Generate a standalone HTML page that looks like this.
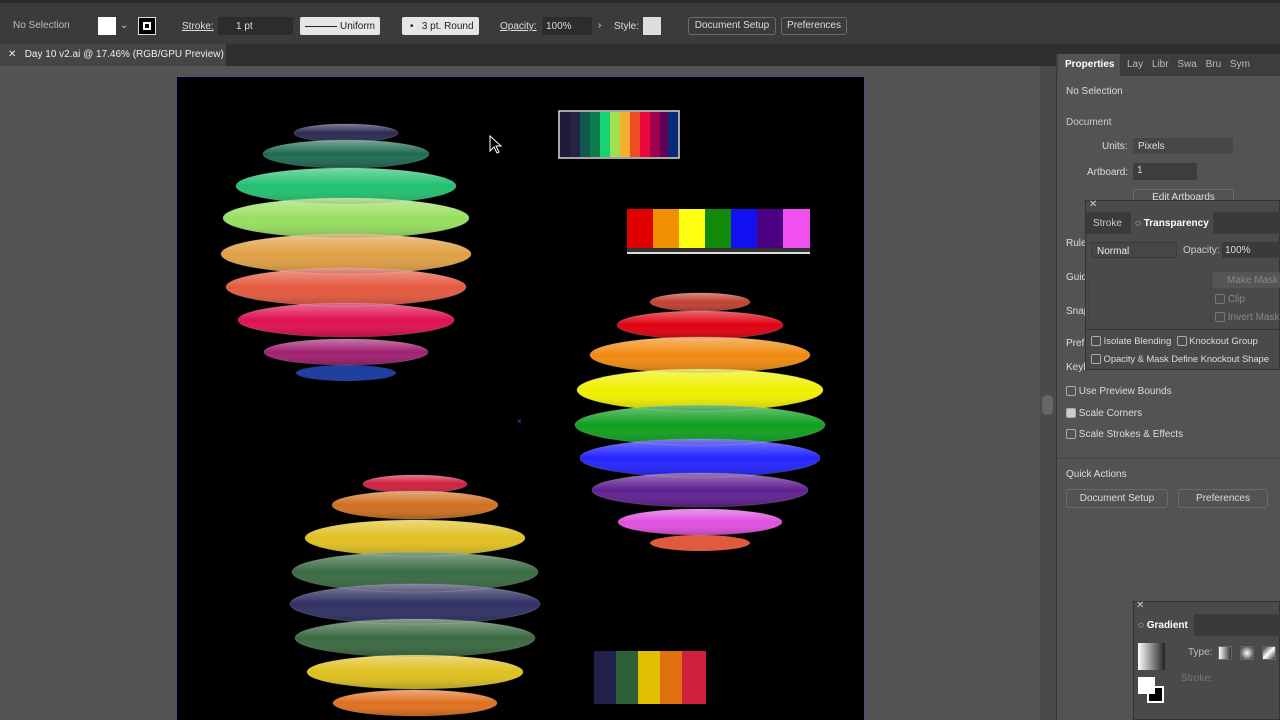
<!DOCTYPE html><html><head><style>
*{margin:0;padding:0;box-sizing:border-box}
body{width:1280px;height:720px;overflow:hidden;background:#535353;font-family:"Liberation Sans",sans-serif;font-size:10px;color:#ddd;position:relative}
.a{position:absolute;white-space:nowrap}
.tb{top:0;left:0;width:1280px;height:44px;background:#3b3b3b}
.tab{top:44px;left:0;width:1280px;height:22px;background:#2f2f2f}
.box{background:#2c2c2c;border-radius:2px}
.lt{background:#e6e6e6;color:#222;border-radius:2px}
.btn{border:1px solid #6b6b6b;border-radius:3px;text-align:center;color:#ddd;line-height:16px;font-size:10px}
.cb{width:10px;height:10px;border:1px solid #aaa;border-radius:2px}
</style></head><body>
<div class="a tb"></div>
<div class="a" style="top:0;left:0;width:1280px;height:3px;background:#2a2a2a"></div>
<div class="a" style="top:20px;left:13px;color:#bbb">No Selection</div>
<div class="a" style="top:17px;left:98px;width:18px;height:18px;background:#fff"></div>
<div class="a" style="top:20px;left:120px;color:#ccc">⌄</div>
<div class="a" style="top:17px;left:138px;width:18px;height:18px;background:#000;border:1px solid #ddd"><div style="margin:4px;width:8px;height:8px;border:2px solid #fff"></div></div>
<div class="a" style="top:21px;left:182px;text-decoration:underline">Stroke:</div>
<div class="a box" style="top:17px;left:218px;width:75px;height:18px;padding:4px 0 0 18px">1 pt</div>
<div class="a lt" style="top:17px;left:300px;width:80px;height:18px;padding:4px 0 0 40px"><span class="a" style="left:5px;top:9px;width:32px;height:1px;background:#222"></span>Uniform</div>
<div class="a lt" style="top:17px;left:402px;width:77px;height:18px;padding:4px 0 0 8px">•&nbsp;&nbsp; 3 pt. Round</div>
<div class="a" style="top:21px;left:500px;text-decoration:underline">Opacity:</div>
<div class="a box" style="top:17px;left:542px;width:50px;height:18px;padding:4px 0 0 4px">100%</div>
<div class="a" style="top:20px;left:598px">›</div>
<div class="a" style="top:21px;left:614px">Style:</div>
<div class="a" style="top:17px;left:643px;width:18px;height:18px;background:#ddd"></div>
<div class="a btn" style="top:17px;left:688px;width:88px;height:18px">Document Setup</div>
<div class="a btn" style="top:17px;left:781px;width:66px;height:18px">Preferences</div>
<div class="a tab"></div>
<div class="a" style="top:44px;left:0;width:226px;height:22px;background:#454545;padding:5px 0 0 8px;color:#eee">✕&nbsp;&nbsp; Day 10 v2.ai @ 17.46% (RGB/GPU Preview)</div>
<div class="a" style="top:66px;left:1040px;width:16px;height:654px;background:#4a4a4a"></div>
<div class="a" style="top:395px;left:1042px;width:11px;height:20px;background:#666;border-radius:5px"></div>
<div class="a" style="top:54px;left:1056px;width:224px;height:666px;background:#535353;border-left:1px solid #333"></div>
<div class="a" style="top:54px;left:1056px;width:224px;height:22px;background:#3d3d3d"></div>
<div class="a" style="top:54px;left:1058px;width:62px;height:23px;background:#535353;padding:5px 0 0 7px;font-weight:bold;color:#fff">Properties</div>
<div class="a" style="top:59px;left:1127px;color:#bbb;word-spacing:6px">Lay Libr Swa Bru Sym</div>
<div class="a" style="top:86px;left:1066px">No Selection</div>
<div class="a" style="top:117px;left:1066px;color:#ccc">Document</div>
<div class="a" style="top:141px;left:1102px">Units:</div>
<div class="a box" style="top:138px;left:1133px;width:100px;height:16px;padding:3px 0 0 5px;background:#464646">Pixels</div>
<div class="a" style="top:167px;left:1087px">Artboard:</div>
<div class="a box" style="top:163px;left:1133px;width:64px;height:17px;padding:2px 0 0 4px;background:#3d3d3d">1</div>
<div class="a btn" style="top:189px;left:1133px;width:101px;height:14px">Edit Artboards</div>
<div class="a" style="top:238px;left:1066px">Rule</div>
<div class="a" style="top:272px;left:1066px">Guid</div>
<div class="a" style="top:306px;left:1066px">Snap</div>
<div class="a" style="top:338px;left:1066px">Pref</div>
<div class="a" style="top:362px;left:1066px">Keyb</div>
<div class="a" style="top:200px;left:1085px;width:195px;height:130px;background:#4a4a4a;border:1px solid #333"></div>
<div class="a" style="top:212px;left:1086px;width:194px;height:22px;background:#3a3a3a"></div>
<div class="a" style="top:199px;left:1089px;color:#ccc">✕</div>
<div class="a" style="top:218px;left:1093px;color:#ccc">Stroke</div>
<div class="a" style="top:212px;left:1131px;width:82px;height:23px;background:#4a4a4a;padding:6px 0 0 4px;font-weight:bold;color:#fff">◌ Transparency</div>
<div class="a box" style="top:242px;left:1091px;width:86px;height:16px;padding:3px 0 0 5px;background:#464646;border:1px solid #3a3a3a;color:#eee">Normal</div>
<div class="a" style="top:245px;left:1183px;color:#ccc">Opacity:</div>
<div class="a box" style="top:242px;left:1222px;width:58px;height:16px;padding:3px 0 0 3px;background:#3a3a3a">100%</div>
<div class="a" style="top:272px;left:1088px;width:123px;height:50px;border:1px solid #454545"></div>
<div class="a" style="top:272px;left:1213px;width:67px;height:16px;background:#555;color:#888;padding:3px 0 0 14px">Make Mask</div>
<div class="a" style="top:294px;left:1215px;color:#888"><span class="cb" style="display:inline-block;border-color:#777;vertical-align:middle"></span> Clip</div>
<div class="a" style="top:312px;left:1215px;color:#888"><span class="cb" style="display:inline-block;border-color:#777;vertical-align:middle"></span> Invert Mask</div>
<div class="a" style="top:330px;left:1085px;width:195px;height:40px;background:#4a4a4a;border:1px solid #333;border-top:none"></div>
<div class="a" style="top:336px;left:1091px;font-size:9.5px"><span class="cb" style="display:inline-block;vertical-align:middle"></span> Isolate Blending &nbsp;<span class="cb" style="display:inline-block;vertical-align:middle"></span> Knockout Group</div>
<div class="a" style="top:354px;left:1091px;font-size:9.5px;letter-spacing:-0.1px"><span class="cb" style="display:inline-block;vertical-align:middle"></span> Opacity &amp; Mask Define Knockout Shape</div>
<div class="a" style="top:386px;left:1066px"><span class="cb" style="display:inline-block;vertical-align:middle"></span> Use Preview Bounds</div>
<div class="a" style="top:408px;left:1066px"><span class="cb" style="display:inline-block;vertical-align:middle;background:#ccc"></span> Scale Corners</div>
<div class="a" style="top:429px;left:1066px"><span class="cb" style="display:inline-block;vertical-align:middle"></span> Scale Strokes &amp; Effects</div>
<div class="a" style="top:458px;left:1057px;width:223px;height:1px;background:#444"></div>
<div class="a" style="top:469px;left:1066px">Quick Actions</div>
<div class="a btn" style="top:489px;left:1066px;width:102px;height:19px;line-height:17px">Document Setup</div>
<div class="a btn" style="top:489px;left:1178px;width:90px;height:19px;line-height:17px">Preferences</div>
<div class="a" style="top:601px;left:1133px;width:147px;height:119px;background:#4a4a4a;border:1px solid #333"></div>
<div class="a" style="top:614px;left:1134px;width:146px;height:22px;background:#3a3a3a"></div>
<div class="a" style="top:614px;left:1134px;width:60px;height:22px;background:#4a4a4a;padding:6px 0 0 4px;font-weight:bold;color:#fff">◌ Gradient</div>
<div class="a" style="top:600px;left:1136px;color:#ccc">✕</div>
<div class="a" style="top:643px;left:1138px;width:27px;height:27px;background:linear-gradient(90deg,#fff,#222)"></div>
<div class="a" style="top:686px;left:1147px;width:17px;height:17px;background:#000;border:2px solid #fff"></div>
<div class="a" style="top:677px;left:1138px;width:17px;height:17px;background:#fff"></div>
<div class="a" style="top:647px;left:1188px;color:#bbb">Type:</div>
<div class="a" style="top:646px;left:1218px;width:14px;height:14px;background:linear-gradient(90deg,#fff,#333);border:1px solid #666"></div>
<div class="a" style="top:646px;left:1240px;width:14px;height:14px;background:radial-gradient(#fff,#333);border:1px solid #666"></div>
<div class="a" style="top:646px;left:1262px;width:14px;height:14px;background:linear-gradient(135deg,#333,#fff,#333);border:1px solid #666"></div>
<div class="a" style="top:673px;left:1181px;color:#777">Stroke:</div>
<div class="a" style="top:76px;left:176px;width:689px;height:644px;background:#000;border:1px solid #4a4aa0;border-bottom:none"></div>
<svg class="a" style="top:0;left:0" width="1040" height="720">
<defs><linearGradient id="sh" x1="0" y1="0" x2="0" y2="1"><stop offset="0" stop-color="#fff" stop-opacity=".4"/><stop offset=".5" stop-color="#fff" stop-opacity="0"/><stop offset="1" stop-color="#000" stop-opacity=".2"/></linearGradient></defs>
<ellipse cx="346" cy="133" rx="52" ry="9" fill="#2a2a52"/>
<ellipse cx="346" cy="154" rx="83" ry="14" fill="#1f6a52"/>
<ellipse cx="346" cy="186" rx="110" ry="18" fill="#22c070"/>
<ellipse cx="346" cy="218" rx="123" ry="20" fill="#98e060"/>
<ellipse cx="346" cy="254" rx="125" ry="20" fill="#e0a045"/>
<ellipse cx="346" cy="287" rx="120" ry="19" fill="#e55a40"/>
<ellipse cx="346" cy="320" rx="108" ry="17" fill="#e01050"/>
<ellipse cx="346" cy="352" rx="82" ry="13" fill="#a02070"/>
<ellipse cx="346" cy="373" rx="50" ry="8" fill="#2040a0"/>
<ellipse cx="700" cy="302" rx="50" ry="9" fill="#c04030"/>
<ellipse cx="700" cy="325" rx="83" ry="14" fill="#e00010"/>
<ellipse cx="700" cy="355" rx="110" ry="18" fill="#f08a10"/>
<ellipse cx="700" cy="390" rx="123" ry="21" fill="#f0f000"/>
<ellipse cx="700" cy="425" rx="125" ry="20" fill="#10a020"/>
<ellipse cx="700" cy="458" rx="120" ry="19" fill="#2424ff"/>
<ellipse cx="700" cy="490" rx="108" ry="17" fill="#602090"/>
<ellipse cx="700" cy="522" rx="82" ry="13" fill="#e050e0"/>
<ellipse cx="700" cy="543" rx="50" ry="8" fill="#e05a40"/>
<ellipse cx="415" cy="484" rx="52" ry="9" fill="#d02040"/>
<ellipse cx="415" cy="505" rx="83" ry="14" fill="#d07020"/>
<ellipse cx="415" cy="538" rx="110" ry="18" fill="#e0c020"/>
<ellipse cx="415" cy="572" rx="123" ry="20" fill="#3a6a42"/>
<ellipse cx="415" cy="604" rx="125" ry="20" fill="#303064"/>
<ellipse cx="415" cy="638" rx="120" ry="19" fill="#3a6a42"/>
<ellipse cx="415" cy="672" rx="108" ry="17" fill="#e0c020"/>
<ellipse cx="415" cy="703" rx="82" ry="13" fill="#e07020"/>
<g fill="url(#sh)" stroke="#fff" stroke-opacity=".15">
<ellipse cx="346" cy="133" rx="52" ry="9"/><ellipse cx="346" cy="154" rx="83" ry="14"/><ellipse cx="346" cy="186" rx="110" ry="18"/><ellipse cx="346" cy="218" rx="123" ry="20"/><ellipse cx="346" cy="254" rx="125" ry="20"/><ellipse cx="346" cy="287" rx="120" ry="19"/><ellipse cx="346" cy="320" rx="108" ry="17"/><ellipse cx="346" cy="352" rx="82" ry="13"/>
<ellipse cx="700" cy="302" rx="50" ry="9"/><ellipse cx="700" cy="325" rx="83" ry="14"/><ellipse cx="700" cy="355" rx="110" ry="18"/><ellipse cx="700" cy="390" rx="123" ry="21"/><ellipse cx="700" cy="425" rx="125" ry="20"/><ellipse cx="700" cy="458" rx="120" ry="19"/><ellipse cx="700" cy="490" rx="108" ry="17"/><ellipse cx="700" cy="522" rx="82" ry="13"/>
<ellipse cx="415" cy="484" rx="52" ry="9"/><ellipse cx="415" cy="505" rx="83" ry="14"/><ellipse cx="415" cy="538" rx="110" ry="18"/><ellipse cx="415" cy="572" rx="123" ry="20"/><ellipse cx="415" cy="604" rx="125" ry="20"/><ellipse cx="415" cy="638" rx="120" ry="19"/><ellipse cx="415" cy="672" rx="108" ry="17"/><ellipse cx="415" cy="703" rx="82" ry="13"/>
</g>
<rect x="559" y="111" width="120" height="47" fill="none" stroke="#ddd" stroke-width="1.5"/>
<g transform="translate(560,112)">
<rect x="0" width="10" height="45" fill="#1e1a38"/><rect x="10" width="10" height="45" fill="#262445"/><rect x="20" width="10" height="45" fill="#11584e"/><rect x="30" width="10" height="45" fill="#0e7c4c"/><rect x="40" width="10" height="45" fill="#16d472"/><rect x="50" width="10" height="45" fill="#a2e050"/><rect x="60" width="10" height="45" fill="#f5b030"/><rect x="70" width="10" height="45" fill="#f04c24"/><rect x="80" width="10" height="45" fill="#e8083c"/><rect x="90" width="10" height="45" fill="#a00050"/><rect x="100" width="8" height="45" fill="#600058"/><rect x="108" width="10" height="45" fill="#0a2a78"/>
</g>
<g transform="translate(627,209)">
<rect x="0" width="26" height="39" fill="#e00000"/><rect x="26" width="26" height="39" fill="#f09000"/><rect x="52" width="26" height="39" fill="#ffff10"/><rect x="78" width="26" height="39" fill="#108a08"/><rect x="104" width="26" height="39" fill="#1010f0"/><rect x="130" width="26" height="39" fill="#4a0080"/><rect x="156" width="27" height="39" fill="#f050f0"/>
<rect x="0" y="39" width="183" height="4" fill="#333"/><rect x="0" y="43" width="183" height="2" fill="#ddd"/>
</g>
<g transform="translate(594,651)">
<rect x="0" width="22" height="53" fill="#20204a"/><rect x="22" width="22" height="53" fill="#30603a"/><rect x="44" width="22" height="53" fill="#e0c000"/><rect x="66" width="22" height="53" fill="#e07010"/><rect x="88" width="24" height="53" fill="#d02040"/>
</g>
<path d="M490 136 L490 151 L494 147 L497 153 L499 152 L496 146 L501 146 Z" fill="#000" stroke="#fff" stroke-width="1"/>
<text x="517" y="424" fill="#5555ff" font-size="8">×</text>
</svg>
</body></html>
